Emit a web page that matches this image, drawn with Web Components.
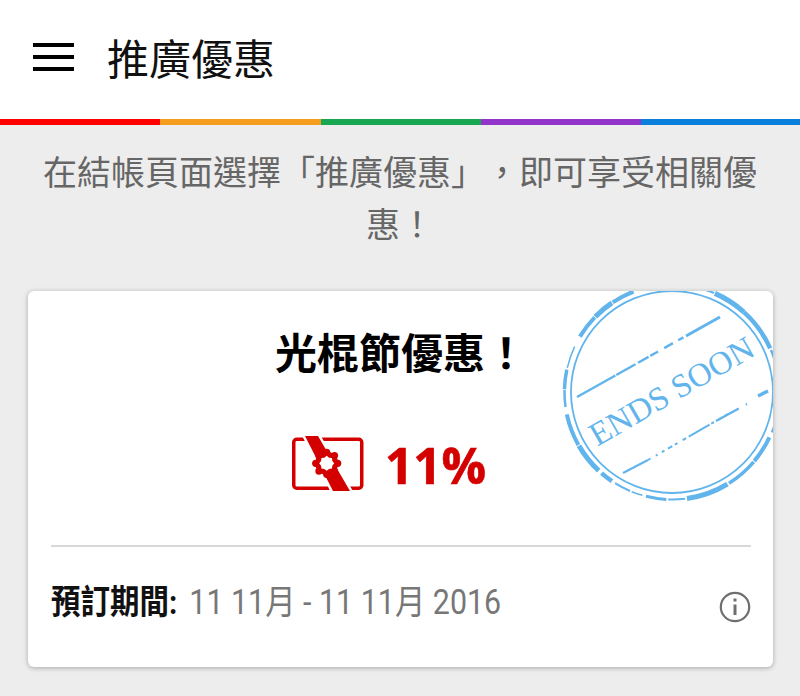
<!DOCTYPE html>
<html lang="zh-Hant">
<head>
<meta charset="utf-8">
<title>推廣優惠</title>
<style>
  html, body { margin: 0; height: 696px; overflow: hidden; background: #ededed; }
  body { font-family: Roboto, "Noto Sans CJK TC", sans-serif; }
</style>
</head>
<body>
<app-bar>推廣優惠</app-bar>
<rainbow-bar></rainbow-bar>
<promo-intro>在結帳頁面選擇「推廣優惠」&#xFF0C;即可享受相關優惠&#xFF01;</promo-intro>
<promo-card heading="光棍節優惠&#xFF01;" discount="11%" label="預訂期間:" dates="11 11月 - 11 11月 2016"></promo-card>

<script>
class AppBar extends HTMLElement {
  constructor() {
    super();
    this.attachShadow({ mode: 'open' }).innerHTML = `
      <style>
        :host {
          display: flex;
          align-items: center;
          box-sizing: border-box;
          height: 119px;
          padding: 0 0 6px 33px;
          background: #fff;
          color: #111;
          font-size: 42px;
        }
        .menu {
          display: flex;
          flex-direction: column;
          gap: 8px;
          width: 41px;
          margin-right: 33px;
        }
        .menu i { display: block; height: 4px; background: #000; }
      </style>
      <div class="menu"><i></i><i></i><i></i></div>
      <slot></slot>
    `;
  }
}

class RainbowBar extends HTMLElement {
  constructor() {
    super();
    this.attachShadow({ mode: 'open' }).innerHTML = `
      <style>
        :host { display: flex; height: 6px; }
        i { display: block; }
      </style>
      <i style="width:160px;background:#fe0000"></i>
      <i style="width:161px;background:#f59d1d"></i>
      <i style="width:160px;background:#17a752"></i>
      <i style="width:160px;background:#9233c9"></i>
      <i style="width:159px;background:#0a80dc"></i>
    `;
  }
}

class PromoIntro extends HTMLElement {
  constructor() {
    super();
    this.attachShadow({ mode: 'open' }).innerHTML = `
      <style>
        :host {
          display: block;
          padding: 22px 40px 0;
          height: 144px;
          box-sizing: border-box;
          margin-bottom: 22px;
          color: #666;
          font-size: 34px;
          line-height: 52px;
          text-align: center;
          text-spacing-trim: space-all;
        }
      </style>
      <slot></slot>
    `;
  }
}

// worn ring of the stamp: start angle, end angle, stroke width (clockwise from east)
const RING = [
  [211, 224, 4], [224.5, 236, 5], [236.5, 249, 4], [251, 258, 1.5],
  [281, 293, 2], [293.5, 312, 5], [312, 336, 4.5], [337, 352, 2.5], [0, 22, 2],
  [25, 40, 4], [40.5, 58, 3.5], [59, 82, 5], [83, 92, 2], [93, 104, 3],
  [106, 112, 1.5], [113, 122, 2], [124, 131, 4.5], [133, 150, 5], [150.5, 168, 4],
  [172, 181, 2.5], [181.5, 192, 3.5], [193, 205, 1.5]
];

function arcPath(r, from, to) {
  const pt = a => {
    const rad = a * Math.PI / 180;
    return (r * Math.cos(rad)).toFixed(1) + ' ' + (r * Math.sin(rad)).toFixed(1);
  };
  return `M${pt(from)} A${r} ${r} 0 0 1 ${pt(to)}`;
}

class EndsStamp extends HTMLElement {
  constructor() {
    super();
    const ring = RING.map(([a, b, w]) => `<path d="${arcPath(107.5, a, b)}" stroke-width="${w}"/>`).join('');
    this.attachShadow({ mode: 'open' }).innerHTML = `
      <style>
        :host { display: block; width: 224px; height: 224px; }
        svg { display: block; }
        text { font-family: "Liberation Serif", serif; font-size: 33px; fill: #62b4ec; }
      </style>
      <svg width="224" height="224" viewBox="-112 -112 224 224">
        <g fill="none" stroke="#62b4ec">
          <circle r="101" stroke-width="1.8"/>
          ${ring}
          <path stroke-width="2.5" stroke-dasharray="44 1 22 3 12 2 9 7 10 6 6 3 5 4 3 6" d="M-95 5 L12 -55"/>
          <path stroke-width="3" d="M14 -56 L48 -75"/>
          <path stroke-width="2.2" d="M-49 81 L-24 68"/>
          <path stroke-width="2" stroke-dasharray="3 6 2 5 3 4 5 3 3 6 4 3 24 2" d="M-24 68 L56 22"/>
          <path stroke-width="2.5" stroke-dasharray="26 8 4 12" d="M44 29 L75 12"/>
          <path stroke-width="3.5" d="M86 4 L96 -1"/>
        </g>
        <text transform="rotate(-30)" x="0" y="10" text-anchor="middle">ENDS SOON</text>
      </svg>
    `;
  }
}

class PromoCard extends HTMLElement {
  constructor() {
    super();
    this.attachShadow({ mode: 'open' }).innerHTML = `
      <style>
        :host {
          display: block;
          position: relative;
          overflow: hidden;
          box-sizing: border-box;
          width: 745px;
          height: 376px;
          margin-left: 28px;
          padding: 0 22px 0 23px;
          background: #fff;
          border-radius: 6px;
        }
        .title {
          margin: 0;
          padding-top: 35px;
          height: 106px;
          box-sizing: border-box;
          color: #000;
          font-size: 42px;
          line-height: 58px;
          font-weight: 700;
          text-align: center;
        }
        .deal {
          display: flex;
          align-items: center;
          justify-content: center;
          gap: 21px;
          height: 134px;
          padding: 0 24px 14px 0;
          border-bottom: 2px solid #d8d8d8;
          color: #d40000;
          font: 700 49.5px "Open Sans", sans-serif;
          -webkit-text-stroke: .6px #d40000;
        }
        .pct { position: relative; top: 1px; }
        .foot {
          display: flex;
          align-items: center;
          justify-content: space-between;
          margin-top: 38px;
          font-size: 30px;
          line-height: 40px;
          color: #777;
        }
        .text { transform: scaleY(1.14); transform-origin: left center; position: relative; top: -2px; }
        .foot svg { margin-top: 4px; }
        b { color: #111; margin-right: 12px; font-size: 29.5px; }
        .dates { font-size: 30.4px; }
        ends-stamp { position: absolute; left: 532px; top: -11px; }
      </style>
      <h2 class="title"></h2>
      <div class="deal">
        <svg width="72" height="58" viewBox="0 0 72 58">
          <rect x="1.75" y="4.25" width="68" height="49" rx="3" fill="none" stroke="#d40000" stroke-width="3.5"/>
          <path d="M13 1 H26 L58 56 H41 Z" fill="#d40000" stroke="#fff" stroke-width="5" paint-order="stroke"/>
          <g transform="translate(34.7 28.3)">
            <circle r="11.5" fill="#d40000"/>
            <g fill="#d40000">
              <circle cx="11" r="3.6"/><circle cx="-11" r="3.6"/><circle cy="11" r="3.6"/><circle cy="-11" r="3.6"/>
              <circle cx="7.8" cy="7.8" r="3.6"/><circle cx="-7.8" cy="7.8" r="3.6"/><circle cx="7.8" cy="-7.8" r="3.6"/><circle cx="-7.8" cy="-7.8" r="3.6"/>
            </g>
            <path fill="#fff" d="M0-7.5 2.4-5.6 5.3-5.3 5.6-2.4 7.5 0 5.6 2.4 5.3 5.3 2.4 5.6 0 7.5-2.4 5.6-5.3 5.3-5.6 2.4-7.5 0-5.6-2.4-5.3-5.3-2.4-5.6Z"/>
          </g>
        </svg>
        <span class="pct"></span>
      </div>
      <div class="foot">
        <span class="text"><b class="label"></b><span class="dates"></span></span>
        <svg width="32" height="32" viewBox="0 0 32 32" fill="none" stroke="#6f6f6f" stroke-width="2.2">
          <circle cx="16" cy="16" r="14.2"/>
          <path d="M16 13.5 V24" stroke-width="3"/>
          <path d="M16 7.5 V10.5" stroke-width="3"/>
        </svg>
      </div>
      <ends-stamp></ends-stamp>
    `;
  }

  connectedCallback() {
    const root = this.shadowRoot;
    root.querySelector('.title').textContent = this.getAttribute('heading');
    root.querySelector('.pct').textContent = this.getAttribute('discount');
    root.querySelector('.label').textContent = this.getAttribute('label');
    root.querySelector('.dates').textContent = this.getAttribute('dates');
    this.style.boxShadow = '0 1px 5px rgba(0,0,0,.3)';
  }
}

customElements.define('app-bar', AppBar);
customElements.define('rainbow-bar', RainbowBar);
customElements.define('promo-intro', PromoIntro);
customElements.define('ends-stamp', EndsStamp);
customElements.define('promo-card', PromoCard);
</script>
</body>
</html>
